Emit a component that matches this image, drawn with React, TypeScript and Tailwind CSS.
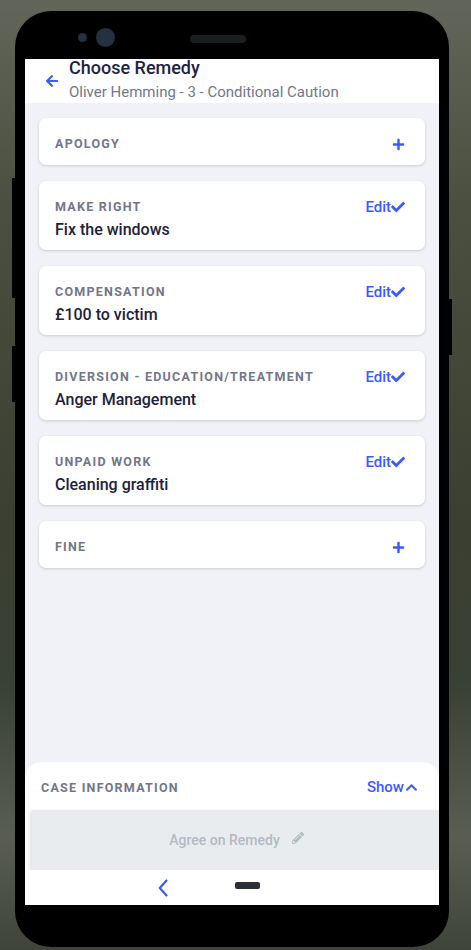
import { FaArrowLeft, FaPlus, FaCheck, FaChevronUp, FaPencilAlt } from 'react-icons/fa';

type Remedy = {
    label: string;
    value?: string;
};

const remedies: Remedy[] = [
    { label: 'Apology' },
    { label: 'Make Right', value: 'Fix the windows' },
    { label: 'Compensation', value: '£100 to victim' },
    { label: 'Diversion - Education/Treatment', value: 'Anger Management' },
    { label: 'Unpaid Work', value: 'Cleaning graffiti' },
    { label: 'Fine' },
];

// One card in the remedy list
function RemedyCard({ remedy }: { remedy: Remedy }) {
    const done = Boolean(remedy.value);
    return (
        <div className={`bg-white rounded-[7px] shadow-[0_1px_3px_rgba(0,0,0,0.16)] pl-4 pr-[20px] pt-[18px] ${done ? 'pb-[10px]' : 'pb-[13px]'}`}>
            <div className="flex items-center justify-between h-[16px]">
                <span className="text-[12.5px] leading-[16px] font-bold uppercase tracking-[0.1em] text-[#737689]">
                    {remedy.label}
                </span>
                {done ? (
                    <span className="flex items-center text-[15px] font-medium text-[#3d5afe]">
                        Edit
                        <FaCheck className="w-[14px] h-[14px]" />
                    </span>
                ) : (
                    <FaPlus className="w-[13px] h-[13px] text-[#3d5afe]" />
                )}
            </div>
            {done && (
                <div className="mt-[4px] text-[16px] leading-[21px] font-medium text-[#1d2139]">
                    {remedy.value}
                </div>
            )}
        </div>
    );
}

export default function App() {
    return (
        <div
            className="relative w-[471px] h-[950px] overflow-hidden pl-[15px] pt-[11px] bg-[linear-gradient(180deg,#62665a_0%,#4a4f3f_22%,#3b3f31_55%,#394034_72%,#5a5e52_88%,#3f443a_100%)]"
            style={{ fontFamily: 'Roboto, "Noto Sans", sans-serif' }}
        >
            {/* phone body */}
            <div className="relative w-[434px] h-[936px] rounded-[36px] bg-black flex flex-col">
                {/* side buttons */}
                <div className="absolute left-[-3px] top-[167px] w-[3px] h-[120px] bg-black" />
                <div className="absolute left-[-3px] top-[335px] w-[3px] h-[56px] bg-black" />
                <div className="absolute right-[-3px] top-[288px] w-[3px] h-[56px] bg-black" />

                {/* top bezel with camera + speaker */}
                <div className="h-[48px] flex items-center pt-[4px]">
                    <div className="ml-[63px] w-[9px] h-[9px] rounded-full bg-[#233140]" />
                    <div className="ml-[9px] w-[19px] h-[19px] rounded-full bg-[#233140]" />
                    <div className="ml-[75px] mt-[4px] w-[56px] h-[8px] rounded-full bg-[#1b1e1e]" />
                </div>

                {/* screen */}
                <div className="mx-[10px] w-[414px] h-[846px] flex flex-col bg-[#f0f2f7]">
                    {/* header */}
                    <div className="h-[44px] bg-white flex items-center">
                        <FaArrowLeft className="ml-[20px] w-[14px] h-[14px] text-[#3d5afe]" />
                        <div className="ml-[10px] flex flex-col self-start">
                            <div className="text-[18px] leading-[18px] font-medium text-[#1d2341]">
                                Choose Remedy
                            </div>
                            <div className="mt-[5px] text-[15px] leading-[20px] text-[#73778a]">
                                Oliver Hemming - 3 - Conditional Caution
                            </div>
                        </div>
                    </div>

                    {/* remedy list */}
                    <div className="flex-1 px-[14px] pt-[15px] flex flex-col gap-[16px]">
                        {remedies.map((r) => (
                            <RemedyCard key={r.label} remedy={r} />
                        ))}
                    </div>

                    {/* bottom sheet */}
                    <div className="bg-white rounded-t-[16px] h-[48px] flex items-center justify-between pl-4 pr-[21px] pt-[3px]">
                        <span className="text-[12.5px] leading-[16px] font-bold uppercase tracking-[0.1em] text-[#737689]">
                            Case Information
                        </span>
                        <span className="flex items-center text-[15px] font-medium text-[#3d5afe]">
                            Show
                            <FaChevronUp className="w-[13px] h-[13px] ml-[1px]" />
                        </span>
                    </div>
                    <div className="bg-white">
                        <div className="ml-[7px] h-[60px] bg-[#e9ecef] shadow-[-2px_1px_3px_rgba(0,0,0,0.12)] flex items-center justify-center gap-[12px] pl-[2px]">
                            <span className="text-[14px] font-medium text-[#b3bac3]">Agree on Remedy</span>
                            <FaPencilAlt className="w-[12px] h-[12px] text-[#b3bac3] -mt-[5px]" />
                        </div>
                    </div>

                    {/* android nav bar */}
                    <div className="h-[35px] bg-white flex items-center pl-[133px] gap-[67px]">
                        <svg width="10" height="18" viewBox="0 0 10 18" className="mt-[1px]">
                            <polyline points="8.5,1.5 1.8,9 8.5,16.5" fill="none" stroke="#3d5afe" strokeWidth="2.2" strokeLinecap="round" strokeLinejoin="round" />
                        </svg>
                        <div className="w-[25px] h-[7px] rounded-[2px] bg-[#263238] -mt-[5px]" />
                    </div>
                </div>
            </div>
        </div>
    );
}
